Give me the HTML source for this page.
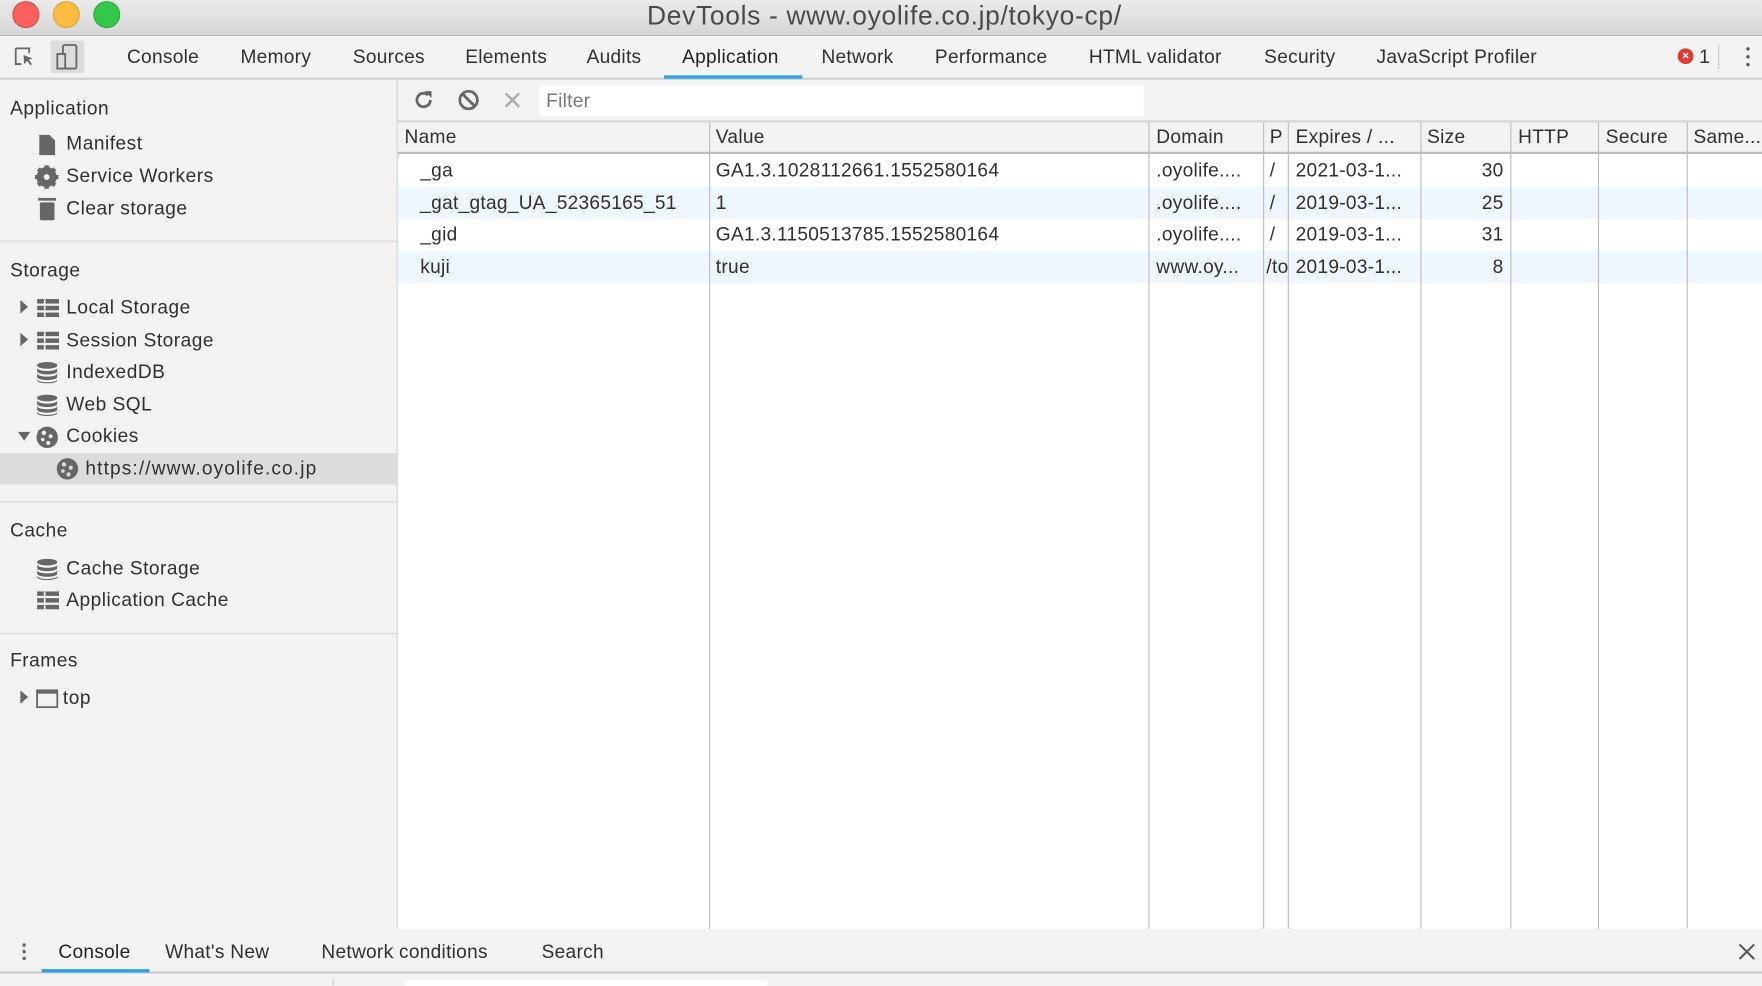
<!DOCTYPE html>
<html><head><meta charset="utf-8"><style>
html,body{margin:0;padding:0;width:1762px;height:986px;overflow:hidden;background:#f3f3f3}
#c{position:absolute;left:0;top:0;width:1568px;height:877px;transform:scale(1.12372,1.12429);transform-origin:0 0;font-family:"Liberation Sans",sans-serif;font-size:17px;color:#303030;background:#f3f3f3;overflow:hidden;letter-spacing:0.25px}
.a{position:absolute;white-space:nowrap}
.t{position:absolute;white-space:nowrap;line-height:20px}
svg{position:absolute}
.vl{position:absolute;top:109px;width:1px;height:717px;background:#bdbdbd}
.row{position:absolute;left:354px;width:1214px;height:28.5px}
.sb{letter-spacing:0.45px}
</style></head><body><div id="c">
<div class="a" style="left:0;top:0;width:1568px;height:31px;background:linear-gradient(#ebebeb,#d6d6d6);border-bottom:1px solid #b5b5b5"></div>
<div class="a" style="left:11px;top:1px;width:22px;height:22px;border-radius:50%;background:#fc605c;border:0.5px solid #de4a45"></div>
<div class="a" style="left:47px;top:1px;width:22px;height:22px;border-radius:50%;background:#fdbc40;border:0.5px solid #dea236"></div>
<div class="a" style="left:83px;top:1px;width:22px;height:22px;border-radius:50%;background:#34c84a;border:0.5px solid #27aa35"></div>
<div class="t" style="left:0;width:1574px;text-align:center;top:1px;font-size:23.5px;line-height:26px;color:#4a4a4a;letter-spacing:0.6px">DevTools - www.oyolife.co.jp/tokyo-cp/</div>
<div class="a" style="left:0;top:32px;width:1568px;height:37px;background:#f3f3f3;border-bottom:2px solid #d0d0d0"></div>
<svg style="left:12px;top:41px" width="20" height="20" viewBox="0 0 20 20"><path d="M2 2h12v4M2 2v14h5" fill="none" stroke="#666" stroke-width="1.6"/><path d="M9 8l8 3-3.5 1 3 4-1.5 1-3-4-2.5 3z" fill="#666"/></svg>
<div class="a" style="left:45px;top:36px;width:30px;height:29px;background:#dcdcdc;border-radius:2px"></div>
<svg style="left:49px;top:38px" width="22" height="26" viewBox="0 0 22 26"><rect x="7" y="2" width="12" height="21" rx="1.5" fill="none" stroke="#666" stroke-width="1.6"/><rect x="2" y="10" width="7" height="13" fill="#dcdcdc" stroke="#666" stroke-width="1.6"/></svg>
<div class="t" style="left:113px;top:41px">Console</div>
<div class="t" style="left:214px;top:41px">Memory</div>
<div class="t" style="left:314px;top:41px">Sources</div>
<div class="t" style="left:414px;top:41px">Elements</div>
<div class="t" style="left:522px;top:41px">Audits</div>
<div class="t" style="left:607px;top:41px;color:#222">Application</div>
<div class="a" style="left:591px;top:67px;width:123px;height:3px;background:#2ea2e6"></div>
<div class="t" style="left:731px;top:41px">Network</div>
<div class="t" style="left:832px;top:41px">Performance</div>
<div class="t" style="left:969px;top:41px">HTML validator</div>
<div class="t" style="left:1125px;top:41px">Security</div>
<div class="t" style="left:1225px;top:41px">JavaScript Profiler</div>
<div class="a" style="left:1493px;top:43px;width:14px;height:14px;border-radius:50%;background:#e53935;color:#fff;font-size:11px;line-height:14px;text-align:center;font-weight:bold;letter-spacing:0">×</div>
<div class="t" style="left:1512px;top:41px">1</div>
<div class="a" style="left:1529px;top:40px;width:1px;height:22px;background:#ccc"></div>
<div class="a" style="left:1554px;top:42px;width:3px;height:3px;border-radius:50%;background:#555;box-shadow:0 7px 0 #555,0 14px 0 #555"></div>
<div class="a" style="left:353px;top:70px;width:1px;height:757px;background:#cfcfcf"></div>
<div class="sb">
<div class="t" style="left:9px;top:87px">Application</div>
<svg style="left:34px;top:119px" width="16" height="20" viewBox="0 0 16 20"><path d="M1 1h9l5 5v13H1z" fill="#666"/></svg>
<div class="t" style="left:59px;top:118px">Manifest</div>
<svg style="left:31px;top:147px" width="21" height="21" viewBox="0 0 20 20"><circle cx="10" cy="10" r="6.5" fill="none" stroke="#666" stroke-width="4"/><g stroke="#666" stroke-width="3.5"><path d="M10 0v20M0 10h20M3 3l14 14M17 3L3 17"/></g><circle cx="10" cy="10" r="2.5" fill="#f3f3f3"/></svg>
<div class="t" style="left:59px;top:147px">Service Workers</div>
<svg style="left:34px;top:176px" width="16" height="20" viewBox="0 0 16 20"><rect x="0" y="0" width="16" height="2.5" fill="#666"/><rect x="1.5" y="4" width="13" height="16" rx="1.5" fill="#666"/></svg>
<div class="t" style="left:59px;top:176px">Clear storage</div>
<div class="a" style="left:0;top:214px;width:353px;height:1px;background:#d9d9d9"></div>
<div class="t" style="left:9px;top:231px">Storage</div>
<svg style="left:18px;top:267px" width="8" height="12"><path d="M0 0l7 6-7 6z" fill="#666"/></svg>
<svg style="left:33px;top:266px" width="20" height="16"><g fill="#666"><rect x="0" y="0" width="6" height="4"/><rect x="7.5" y="0" width="12" height="4"/><rect x="0" y="6" width="6" height="4"/><rect x="7.5" y="6" width="12" height="4"/><rect x="0" y="12" width="6" height="4"/><rect x="7.5" y="12" width="12" height="4"/></g></svg>
<div class="t" style="left:59px;top:264px">Local Storage</div>
<svg style="left:18px;top:296px" width="8" height="12"><path d="M0 0l7 6-7 6z" fill="#666"/></svg>
<svg style="left:33px;top:295px" width="20" height="16"><g fill="#666"><rect x="0" y="0" width="6" height="4"/><rect x="7.5" y="0" width="12" height="4"/><rect x="0" y="6" width="6" height="4"/><rect x="7.5" y="6" width="12" height="4"/><rect x="0" y="12" width="6" height="4"/><rect x="7.5" y="12" width="12" height="4"/></g></svg>
<div class="t" style="left:59px;top:293px">Session Storage</div>
<svg style="left:33px;top:322px" width="18" height="19" viewBox="0 0 18 19"><g fill="#666"><ellipse cx="9" cy="3" rx="9" ry="3"/><path d="M0 5c0 2 4 3 9 3s9-1 9-3v3c0 2-4 3-9 3S0 10 0 8z"/><path d="M0 10c0 2 4 3 9 3s9-1 9-3v3c0 2-4 3-9 3S0 15 0 13z"/><path d="M0 15c0 2 4 3 9 3s9-1 9-3v1c0 2-4 3-9 3s-9-1-9-3z"/></g></svg>
<div class="t" style="left:59px;top:321px">IndexedDB</div>
<svg style="left:33px;top:351px" width="18" height="19" viewBox="0 0 18 19"><g fill="#666"><ellipse cx="9" cy="3" rx="9" ry="3"/><path d="M0 5c0 2 4 3 9 3s9-1 9-3v3c0 2-4 3-9 3S0 10 0 8z"/><path d="M0 10c0 2 4 3 9 3s9-1 9-3v3c0 2-4 3-9 3S0 15 0 13z"/><path d="M0 15c0 2 4 3 9 3s9-1 9-3v1c0 2-4 3-9 3s-9-1-9-3z"/></g></svg>
<div class="t" style="left:59px;top:350px">Web SQL</div>
<svg style="left:16px;top:384px" width="12" height="9"><path d="M0 0h11l-5.5 8z" fill="#666"/></svg>
<svg style="left:32px;top:379px" width="20" height="20" viewBox="0 0 20 20"><circle cx="10" cy="10" r="9.5" fill="#666"/><g fill="#f3f3f3"><circle cx="7" cy="6" r="2"/><circle cx="13" cy="9" r="1.8"/><circle cx="6" cy="12" r="1.6"/><circle cx="11" cy="15" r="1.8"/></g></svg>
<div class="t" style="left:59px;top:378px">Cookies</div>
<div class="a" style="left:0;top:403px;width:353px;height:28px;background:#dcdcdc"></div>
<svg style="left:50px;top:407px" width="20" height="20" viewBox="0 0 20 20"><circle cx="10" cy="10" r="9.5" fill="#666"/><g fill="#dcdcdc"><circle cx="7" cy="6" r="2"/><circle cx="13" cy="9" r="1.8"/><circle cx="6" cy="12" r="1.6"/><circle cx="11" cy="15" r="1.8"/></g></svg>
<div class="t" style="left:76px;top:407px;letter-spacing:1px">https://www.oyolife.co.jp</div>
<div class="a" style="left:0;top:446px;width:353px;height:1px;background:#d9d9d9"></div>
<div class="t" style="left:9px;top:462px">Cache</div>
<svg style="left:33px;top:497px" width="18" height="19" viewBox="0 0 18 19"><g fill="#666"><ellipse cx="9" cy="3" rx="9" ry="3"/><path d="M0 5c0 2 4 3 9 3s9-1 9-3v3c0 2-4 3-9 3S0 10 0 8z"/><path d="M0 10c0 2 4 3 9 3s9-1 9-3v3c0 2-4 3-9 3S0 15 0 13z"/><path d="M0 15c0 2 4 3 9 3s9-1 9-3v1c0 2-4 3-9 3s-9-1-9-3z"/></g></svg>
<div class="t" style="left:59px;top:496px">Cache Storage</div>
<svg style="left:33px;top:526px" width="20" height="16"><g fill="#666"><rect x="0" y="0" width="6" height="4"/><rect x="7.5" y="0" width="12" height="4"/><rect x="0" y="6" width="6" height="4"/><rect x="7.5" y="6" width="12" height="4"/><rect x="0" y="12" width="6" height="4"/><rect x="7.5" y="12" width="12" height="4"/></g></svg>
<div class="t" style="left:59px;top:524px">Application Cache</div>
<div class="a" style="left:0;top:563px;width:353px;height:1px;background:#d9d9d9"></div>
<div class="t" style="left:9px;top:578px">Frames</div>
<svg style="left:18px;top:614px" width="8" height="12"><path d="M0 0l7 6-7 6z" fill="#666"/></svg>
<svg style="left:32px;top:613px" width="20" height="17"><rect x="1" y="1" width="18" height="15" fill="none" stroke="#666" stroke-width="1.6"/><rect x="1" y="1" width="18" height="3" fill="#666"/></svg>
<div class="t" style="left:56px;top:611px">top</div>
</div>
<svg style="left:367px;top:79px" width="20" height="20" viewBox="0 0 20 20"><path d="M16 10a6 6 0 1 1-2-4.5" fill="none" stroke="#666" stroke-width="2.4"/><path d="M11 2h6v6z" fill="#666"/></svg>
<svg style="left:407px;top:79px" width="20" height="20" viewBox="0 0 20 20"><circle cx="10" cy="10" r="7.8" fill="none" stroke="#666" stroke-width="2.4"/><path d="M4.5 4.5l11 11" stroke="#666" stroke-width="2.4"/></svg>
<svg style="left:448px;top:81px" width="16" height="16"><path d="M2 2l12 12M14 2L2 14" stroke="#aaa" stroke-width="2"/></svg>
<div class="a" style="left:480px;top:76px;width:538px;height:27px;background:#fff"></div>
<div class="t" style="left:486px;top:80px;color:#777">Filter</div>
<div class="a" style="left:354px;top:107px;width:1214px;height:2px;background:#d6d6d6"></div>
<div class="a" style="left:354px;top:109px;width:1214px;height:717px;background:#fff"></div>
<div class="a" style="left:354px;top:109px;width:1214px;height:26px;background:#f3f3f3;border-bottom:2px solid #bdbdbd"></div>
<div class="row" style="top:166px;background:#f0f6fe"></div>
<div class="row" style="top:223px;background:#f0f6fe"></div>
<div class="vl" style="left:631px"></div><div class="vl" style="left:1022px"></div><div class="vl" style="left:1124px"></div><div class="vl" style="left:1146px"></div><div class="vl" style="left:1264px"></div><div class="vl" style="left:1344px"></div><div class="vl" style="left:1422px"></div><div class="vl" style="left:1501px"></div>
<div class="t" style="left:360px;top:112px">Name</div>
<div class="t" style="left:637px;top:112px">Value</div>
<div class="t" style="left:1029px;top:112px">Domain</div>
<div class="t" style="left:1130px;top:112px">P</div>
<div class="t" style="left:1153px;top:112px">Expires / ...</div>
<div class="t" style="left:1270px;top:112px">Size</div>
<div class="t" style="left:1351px;top:112px">HTTP</div>
<div class="t" style="left:1429px;top:112px">Secure</div>
<div class="t" style="left:1507px;top:112px">Same...</div>
<div class="t" style="left:374px;top:142px">_ga</div><div class="t" style="left:637px;top:142px">GA1.3.1028112661.1552580164</div><div class="t" style="left:1029px;top:142px">.oyolife....</div><div class="t" style="left:1130px;top:142px">/</div><div class="t" style="left:1153px;top:142px">2021-03-1...</div><div class="t" style="left:1264px;width:74px;text-align:right;top:142px">30</div>
<div class="t" style="left:374px;top:171px">_gat_gtag_UA_52365165_51</div><div class="t" style="left:637px;top:171px">1</div><div class="t" style="left:1029px;top:171px">.oyolife....</div><div class="t" style="left:1130px;top:171px">/</div><div class="t" style="left:1153px;top:171px">2019-03-1...</div><div class="t" style="left:1264px;width:74px;text-align:right;top:171px">25</div>
<div class="t" style="left:374px;top:199px">_gid</div><div class="t" style="left:637px;top:199px">GA1.3.1150513785.1552580164</div><div class="t" style="left:1029px;top:199px">.oyolife....</div><div class="t" style="left:1130px;top:199px">/</div><div class="t" style="left:1153px;top:199px">2019-03-1...</div><div class="t" style="left:1264px;width:74px;text-align:right;top:199px">31</div>
<div class="t" style="left:374px;top:228px">kuji</div><div class="t" style="left:637px;top:228px">true</div><div class="t" style="left:1029px;top:228px">www.oy...</div><div class="t" style="left:1127px;top:228px;width:19px;overflow:hidden">/to</div><div class="t" style="left:1153px;top:228px">2019-03-1...</div><div class="t" style="left:1264px;width:74px;text-align:right;top:228px">8</div>
<div class="a" style="left:0;top:826px;width:1568px;height:38px;background:#f3f3f3;border-bottom:2px solid #cfcfcf"></div>
<div class="a" style="left:20px;top:839px;width:3px;height:3px;border-radius:50%;background:#666;box-shadow:0 6px 0 #666,0 12px 0 #666"></div>
<div class="t" style="left:52px;top:837px;color:#222">Console</div>
<div class="a" style="left:37px;top:862px;width:96px;height:3px;background:#2ea2e6"></div>
<div class="t" style="left:147px;top:837px">What's New</div>
<div class="t" style="left:286px;top:837px">Network conditions</div>
<div class="t" style="left:482px;top:837px">Search</div>
<svg style="left:1547px;top:839px" width="15" height="15"><path d="M1 1l13 13M14 1L1 14" stroke="#555" stroke-width="1.8"/></svg>
<div class="a" style="left:360px;top:872px;width:323px;height:10px;background:#fff"></div>
<div class="a" style="left:296px;top:870px;width:1px;height:10px;background:#ccc"></div>
</div></body></html>
